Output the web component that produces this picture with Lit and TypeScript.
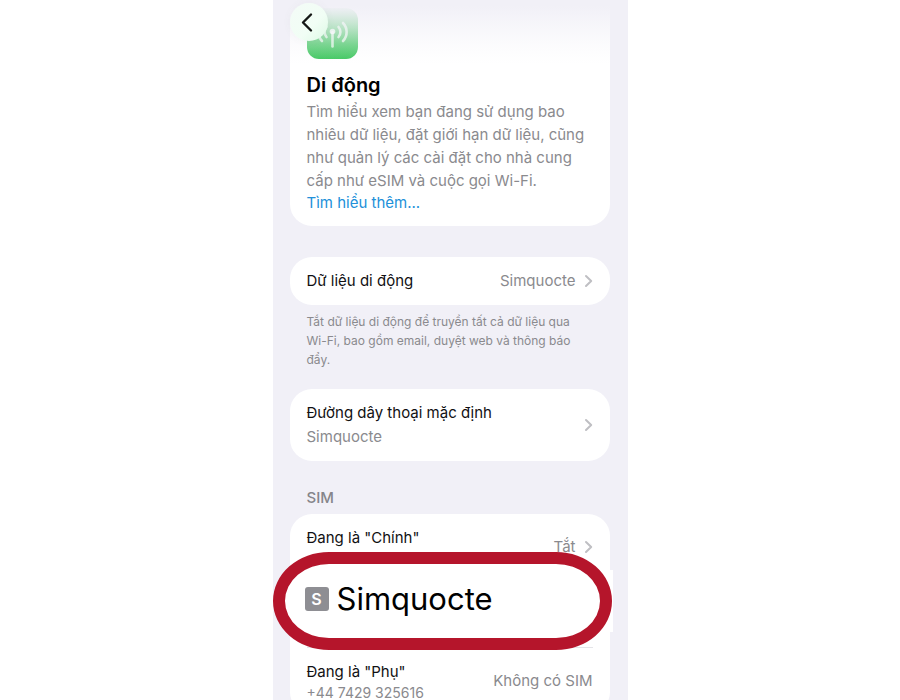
import { LitElement, html, css } from "lit";
import { customElement, property } from "lit/decorators.js";

@customElement("chevron-icon")
class ChevronIcon extends LitElement {
  static styles = css`
    :host { display: block; flex: none; width: 9px; height: 14px; }
    .icon { display: block; width: 9px; height: 14px; }
  `;
  render() {
    return html`<svg class="icon" viewBox="0 0 9 14" fill="none" aria-hidden="true">
      <path d="M2 2 7.2 7 2 12" stroke="#bfbfc3" stroke-width="2" stroke-linecap="round" stroke-linejoin="round" />
    </svg>`;
  }
}

@customElement("settings-row")
class SettingsRow extends LitElement {
  @property() label = "";
  @property() detail = "";
  @property() value = "";
  @property({ type: Boolean }) chevron = false;

  static styles = css`
    :host { display: block; }
    .row {
      box-sizing: border-box;
      display: flex;
      align-items: center;
      gap: 8px;
      width: 100%;
      padding: 12px 17px;
      border: 0;
      background: none;
      color: #111113;
      font: inherit;
      line-height: 24px;
      text-align: left;
      cursor: pointer;
    }
    .text { flex: 1; min-width: 0; }
    .label, .detail { display: block; }
    .detail, .value { color: #8a8a8e; }
  `;

  render() {
    return html`<button class="row" type="button">
      <span class="text">
        <span class="label">${this.label}</span>
        ${this.detail ? html`<span class="detail">${this.detail}</span>` : null}
      </span>
      ${this.value ? html`<span class="value">${this.value}</span>` : null}
      ${this.chevron ? html`<chevron-icon></chevron-icon>` : null}
    </button>`;
  }
}

@customElement("app-root")
class AppRoot extends LitElement {
  static styles = css`
    * { box-sizing: border-box; }
    :host {
      display: block;
      height: 100vh;
      overflow: hidden;
      background: #fff;
      color: #111113;
      font: 15px/24px Inter, "Noto Sans", sans-serif;
    }
    .screen {
      position: relative;
      width: 100%;
      max-width: 355px;
      min-height: 100vh;
      margin: 0 auto;
      padding: 0 18px 0 17px;
      background: #f1f0f7;
    }
    .fade {
      position: absolute;
      inset: 0 0 auto;
      height: 64px;
      background: linear-gradient(#f1f0f7 6px, rgba(241, 240, 247, 0.7) 20px, rgba(241, 240, 247, 0.25) 44px, rgba(241, 240, 247, 0));
    }
    .back {
      position: absolute;
      top: 3px;
      left: 17px;
      width: 38px;
      height: 38px;
      padding: 0;
      border: 0;
      border-radius: 50%;
      background: linear-gradient(135deg, #f4fbf7, #f1fef5 60%, #dcf9e4);
      box-shadow: 0 0 8px rgba(90, 110, 100, 0.05);
      cursor: pointer;
    }
    .back-icon { display: block; width: 38px; height: 38px; }
    .card { border-radius: 22px; background: #fff; }
    .intro { padding: 8px 17px 13px; border-radius: 0 0 22px 22px; }
    .app-icon { display: block; width: 51px; height: 51px; }
    .title {
      margin: 14px 0 3px;
      color: #000;
      font-size: 20px;
      font-weight: 600;
      line-height: 24px;
    }
    .description { margin: 0; color: #8a8a8e; line-height: 23px; }
    .keep { white-space: nowrap; }
    .more {
      display: block;
      color: #2190d9;
      line-height: 21px;
      text-decoration: none;
    }
    .group { margin-top: 31px; }
    .note {
      margin: 7px 17px 0;
      color: #8a8a8e;
      font-size: 12px;
      line-height: 19px;
    }
    .spaced { margin-top: 20px; }
    .heading {
      margin: 25px 17px 4px;
      color: #85858a;
      font-size: 15px;
      font-weight: 500;
      line-height: 24px;
    }
    .sim { position: relative; }
    .primary {
      display: flex;
      align-items: flex-start;
      justify-content: space-between;
      width: 100%;
      height: 133px;
      padding: 12px 17px;
      border: 0;
      background: none;
      color: inherit;
      font: inherit;
      text-align: left;
      cursor: pointer;
    }
    .state {
      display: flex;
      align-items: center;
      gap: 8px;
      height: 24px;
      margin-top: 9px;
      color: #8a8a8e;
    }
    .rule { height: 1px; margin: 0 17px; border: 0; background: #e4e4e8; }
    .callout {
      position: absolute;
      top: 38px;
      left: -17px;
      right: -2px;
      display: flex;
      align-items: center;
      gap: 8px;
      height: 98px;
      padding: 0 20px 4px;
      border: 12px solid #b5152b;
      border-radius: 56px / 49px;
      background: #fff;
      color: #000;
      font-size: 31px;
      line-height: 40px;
    }
    .patch {
      position: absolute;
      top: 56px;
      right: -3px;
      width: 12px;
      height: 62px;
      background: #fff;
    }
    .badge {
      width: 24px;
      height: 24px;
      border-radius: 3px;
      background: #8e8e93;
      color: #fff;
      font-size: 16px;
      font-weight: 600;
      line-height: 24px;
      text-align: center;
    }
    .secondary {
      display: flex;
      align-items: center;
      justify-content: space-between;
      width: 100%;
      padding: 12px 17px;
      border: 0;
      background: none;
      color: inherit;
      font: inherit;
      text-align: left;
      cursor: pointer;
    }
    .name, .number { display: block; }
    .number { color: #8a8a8e; font-size: 14px; line-height: 18px; }
    .status { color: #8a8a8e; }
  `;

  render() {
    return html`<main class="screen">
      <section class="card intro">
        <svg class="app-icon" viewBox="0 0 51 51" fill="none" aria-hidden="true">
          <defs>
            <linearGradient id="green" x1="0" y1="0" x2="0" y2="1">
              <stop offset="0" stop-color="#9cdcaa" />
              <stop offset=".5" stop-color="#66cf7f" />
              <stop offset="1" stop-color="#3dc75d" />
            </linearGradient>
          </defs>
          <rect width="51" height="51" rx="12" fill="url(#green)" />
          <g stroke="#fff" stroke-linecap="round" stroke-width="2.6" opacity=".7">
            <path d="M25.5 24v14.5" />
            <path d="M19.5 29a7.5 7.5 0 0 1 0-10M31.5 29a7.5 7.5 0 0 0 0-10" />
            <path d="M15 33a13 13 0 0 1 0-18M36 33a13 13 0 0 0 0-18" />
          </g>
          <circle cx="25.5" cy="23.5" r="2.8" fill="#fff" opacity=".8" />
        </svg>
        <h1 class="title">Di động</h1>
        <p class="description">
          Tìm hiểu xem bạn đang sử dụng bao nhiêu dữ liệu, đặt giới hạn dữ liệu, cũng như quản lý các cài đặt cho nhà cung cấp như eSIM và cuộc gọi Wi-Fi.
        </p>
        <a class="more" href="#more">Tìm hiểu thêm...</a>
      </section>

      <section class="card group">
        <settings-row label="Dữ liệu di động" value="Simquocte" chevron></settings-row>
      </section>
      <p class="note">Tắt dữ liệu di động để truyền tất cả dữ liệu qua <span class="keep">Wi-Fi,</span> bao gồm email, duyệt web và thông báo đẩy.</p>

      <section class="card spaced">
        <settings-row label="Đường dây thoại mặc định" detail="Simquocte" chevron></settings-row>
      </section>

      <h2 class="heading">SIM</h2>
      <section class="card sim">
        <button class="primary" type="button">
          <span>Đang là "Chính"</span>
          <span class="state">Tắt <chevron-icon></chevron-icon></span>
        </button>
        <hr class="rule" />
        <button class="secondary" type="button">
          <span>
            <span class="name">Đang là "Phụ"</span>
            <span class="number">+44 7429 325616</span>
          </span>
          <span class="status">Không có SIM</span>
        </button>
        <div class="patch"></div>
        <div class="callout"><span class="badge">S</span><span>Simquocte</span></div>
      </section>

      <div class="fade"></div>
      <button class="back" type="button" aria-label="Quay lại">
        <svg class="back-icon" viewBox="0 0 38 38" fill="none" aria-hidden="true">
          <path d="M21 11.5 13 19.5l8 8" stroke="#151816" stroke-width="2.4" stroke-linecap="round" stroke-linejoin="round" />
        </svg>
      </button>
    </main>`;
  }
}
